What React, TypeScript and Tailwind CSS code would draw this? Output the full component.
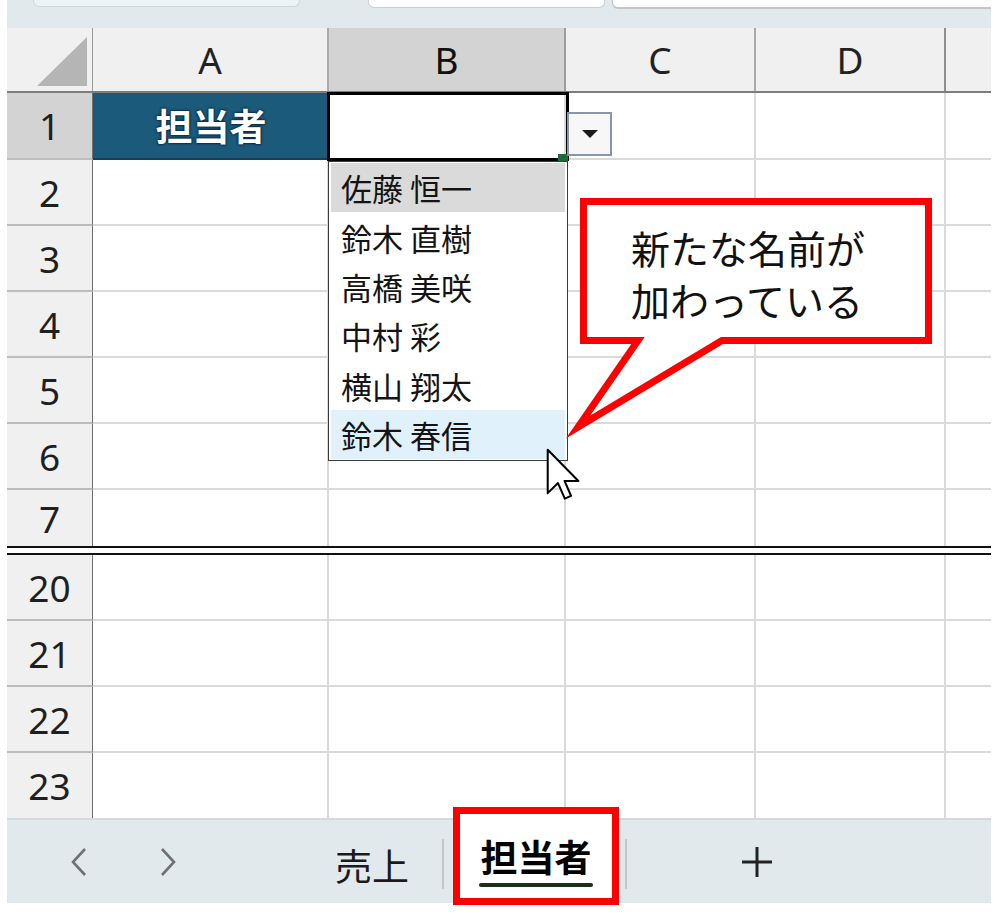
import React from "react";

const JP = "font-['Noto_Sans_CJK_JP','Noto_Sans',sans-serif]";
const NUM = "font-['Noto_Sans','Noto_Sans_CJK_JP',sans-serif]";

function RowHeader({ label, h, selected, last }: { label: string; h: string; selected?: boolean; last?: boolean }) {
  return (
    <div
      className={`${h} w-[86px] shrink-0 flex items-center justify-center border-r border-r-[#6f6f6f] ${
        last ? "" : "border-b-2 border-b-[#bdbdbd]"
      } ${selected ? "bg-[#d3d3d3]" : "bg-[#f0f0f0]"} ${NUM} text-[37px] leading-none text-[#1f1f1f]`}
    >
      {label}
    </div>
  );
}

function EmptyCells({ last }: { last?: boolean }) {
  const b = last ? "" : "border-b-2";
  return (
    <>
      <div className={`w-[236px] shrink-0 border-r-2 ${b} border-[#dadada] bg-white`} />
      <div className={`w-[237px] shrink-0 border-r-2 ${b} border-[#dadada] bg-white`} />
      <div className={`w-[190px] shrink-0 border-r-2 ${b} border-[#dadada] bg-white`} />
      <div className={`w-[190px] shrink-0 border-r-2 ${b} border-[#dadada] bg-white`} />
      <div className={`w-[45px] shrink-0 ${b} border-[#dadada] bg-white`} />
    </>
  );
}

function Row({ label, h, last }: { label: string; h: string; last?: boolean }) {
  return (
    <div className={`flex ${h}`}>
      <RowHeader label={label} h={h} last={last} />
      <EmptyCells last={last} />
    </div>
  );
}

const items = ["佐藤 恒一", "鈴木 直樹", "高橋 美咲", "中村 彩", "横山 翔太", "鈴木 春信"];

export default function App() {
  return (
    <div className="relative w-[1000px] h-[917px] bg-white overflow-hidden">
      <div className="ml-[7px] w-[984px] flex flex-col">
        {/* top strip */}
        <div className="h-[28px] bg-[#e2e9ed] flex items-start">
          <div className="ml-[26px] w-[267px] h-[7px] rounded-b-[6px] border-b border-x border-[#cfd6da] bg-[#eef2f5]" />
          <div className="ml-[68px] w-[237px] h-[8px] rounded-b-[6px] border-b border-x border-[#c9cfd3] bg-white" />
          <div className="ml-[7px] flex-1 h-[9px] rounded-bl-[6px] border-b-2 border-l border-[#c4c4c4] bg-white" />
        </div>

        {/* column header */}
        <div className="flex h-[65px] border-b-2 border-[#7d7d7d] bg-[#f0f0f0]">
          <div className="w-[86px] shrink-0 relative border-r border-[#9a9a9a]">
            <svg className="absolute left-0 top-0" width="86" height="63" viewBox="0 0 86 63">
              <polygon points="30,58 80,58 80,9" fill="#b5b5b5" />
            </svg>
          </div>
          <div className={`w-[236px] shrink-0 border-r-2 border-[#ababab] flex items-center justify-center ${NUM} text-[37px] leading-none text-[#222]`}>A</div>
          <div className={`w-[237px] shrink-0 border-r-2 border-[#9d9d9d] bg-[#d3d3d3] flex items-center justify-center ${NUM} text-[37px] leading-none text-[#111]`}>B</div>
          <div className={`w-[190px] shrink-0 border-r-2 border-[#ababab] flex items-center justify-center ${NUM} text-[37px] leading-none text-[#222]`}>C</div>
          <div className={`w-[190px] shrink-0 border-r-2 border-[#8f8f8f] flex items-center justify-center ${NUM} text-[37px] leading-none text-[#222]`}>D</div>
          <div className="w-[45px] shrink-0" />
        </div>

        {/* row 1 */}
        <div className="flex h-[67px]">
          <RowHeader label="1" h="h-[67px]" selected />
          <div className={`w-[236px] shrink-0 border-b-2 border-[#123f5a] bg-[#1b5a7b] flex items-center justify-center ${JP} font-bold text-[37px] leading-none text-white [text-shadow:0_0_3px_#04172b,0_0_2px_#04172b]`}>
            担当者
          </div>
          <div className="w-[237px] shrink-0 border-r-2 border-b-2 border-[#dadada] bg-white relative z-10">
            <div className="absolute left-[-2px] top-[-1px] w-[242px] h-[69px] border-[3px] border-black" />
            <div className="absolute left-[229px] top-[61px] w-[10px] h-[8px] bg-[#1f6a3a]" />
            {/* dropdown button */}
            <div className="absolute left-[238px] top-[19px] w-[45px] h-[44px] border-2 border-[#8896a8] bg-[#f7f7f7] flex items-center justify-center">
              <svg width="16" height="9" viewBox="0 0 16 9">
                <polygon points="0,0 16,0 8,8" fill="#1a1a1a" />
              </svg>
            </div>
            {/* dropdown list */}
            <div className="absolute left-[-1px] top-[68px] w-[240px] border-[1.5px] border-[#3a3a3a] bg-white pt-[1px] px-[2px] pb-[1px] flex flex-col">
              {items.map((t, i) => (
                <div
                  key={t}
                  className={`h-[49.4px] flex items-center pl-[10px] ${JP} text-[31px] leading-none text-[#141414] ${
                    i === 0 ? "bg-[#dadada]" : i === items.length - 1 ? "bg-[#e1f1fc]" : ""
                  }`}
                >
                  {t}
                </div>
              ))}
            </div>
          </div>
          <div className="w-[190px] shrink-0 border-r-2 border-b-2 border-[#dadada] bg-white" />
          <div className="w-[190px] shrink-0 border-r-2 border-b-2 border-[#dadada] bg-white" />
          <div className="w-[45px] shrink-0 border-b-2 border-[#dadada] bg-white" />
        </div>

        <Row label="2" h="h-[66px]" />
        <Row label="3" h="h-[66px]" />
        <Row label="4" h="h-[66px]" />
        <Row label="5" h="h-[66px]" />
        <Row label="6" h="h-[66px]" />
        <Row label="7" h="h-[56px]" last />

        {/* split double line */}
        <div className="h-[9px] border-y-2 border-[#111] bg-white" />

        <Row label="20" h="h-[66px]" />
        <Row label="21" h="h-[66px]" />
        <Row label="22" h="h-[66px]" />
        <Row label="23" h="h-[65px]" last />

        {/* sheet tab bar */}
        <div className="h-[85px] bg-[#e2e9ed] border-t-2 border-[#d3d9dd] flex items-center">
          <div className="w-[52px] shrink-0" />
          <div className="w-[40px] shrink-0 flex justify-center">
            <svg width="18" height="30" viewBox="0 0 18 30">
              <polyline points="15,2 3,15 15,28" fill="none" stroke="#707070" strokeWidth="2.6" />
            </svg>
          </div>
          <div className="w-[49px] shrink-0" />
          <div className="w-[40px] shrink-0 flex justify-center">
            <svg width="18" height="30" viewBox="0 0 18 30">
              <polyline points="3,2 15,15 3,28" fill="none" stroke="#707070" strokeWidth="2.6" />
            </svg>
          </div>
          <div className="w-[147px] shrink-0" />
          <div className={`w-[74px] shrink-0 mt-[8px] whitespace-nowrap text-center ${JP} text-[37px] leading-none text-[#1a1a1a]`}>売上</div>
          <div className="w-[33px] shrink-0" />
          <div className="w-[2px] h-[50px] shrink-0 mt-[4px] bg-[#c3c7ca]" />
          <div className="w-[9px] shrink-0" />
          <div className="w-[166px] h-[98px] shrink-0 self-end mb-[-2px] border-[7px] border-[#ff0000] bg-white flex flex-col items-center pt-[22px]">
            <div className={`${JP} font-bold text-[37px] leading-[40px] text-black whitespace-nowrap`}>担当者</div>
            <div className="mt-[7px] w-[114px] h-[4px] rounded-full bg-[#18301c]" />
          </div>
          <div className="w-[6px] shrink-0" />
          <div className="w-[2px] h-[50px] shrink-0 mt-[4px] bg-[#c3c7ca]" />
          <div className="w-[110px] shrink-0" />
          <div className="w-[40px] shrink-0 flex justify-center">
            <svg width="32" height="32" viewBox="0 0 32 32">
              <line x1="16" y1="1" x2="16" y2="31" stroke="#222" strokeWidth="3" />
              <line x1="1" y1="16" x2="31" y2="16" stroke="#222" strokeWidth="3" />
            </svg>
          </div>
        </div>
      </div>

      {/* callout shape */}
      <svg className="absolute left-0 top-0 pointer-events-none z-20" width="1000" height="917" viewBox="0 0 1000 917">
        <path
          d="M583.5,201.5 H928.5 V340.5 H722 L578,427 L638,340.5 H583.5 Z"
          fill="white"
          stroke="#ff0000"
          strokeWidth="7"
          strokeLinejoin="miter"
          strokeMiterlimit="10"
        />
      </svg>
      <div className={`absolute left-[631px] top-[222px] z-30 flex flex-col gap-[2px] ${JP} text-[39px] leading-[50px] text-[#111]`}>
        <div>新たな名前が</div>
        <div>加わっている</div>
      </div>

      {/* mouse cursor */}
      <svg className="absolute left-[545px] top-[447px] z-30" width="38" height="57" viewBox="-1 -1 14 21">
        <path
          d="M0,0 L0,16 L3.8,12.3 L6.3,18 L8.6,17 L6.2,11.5 L11.3,11.5 Z"
          fill="white"
          stroke="black"
          strokeWidth="0.75"
          strokeLinejoin="round"
        />
      </svg>
    </div>
  );
}
